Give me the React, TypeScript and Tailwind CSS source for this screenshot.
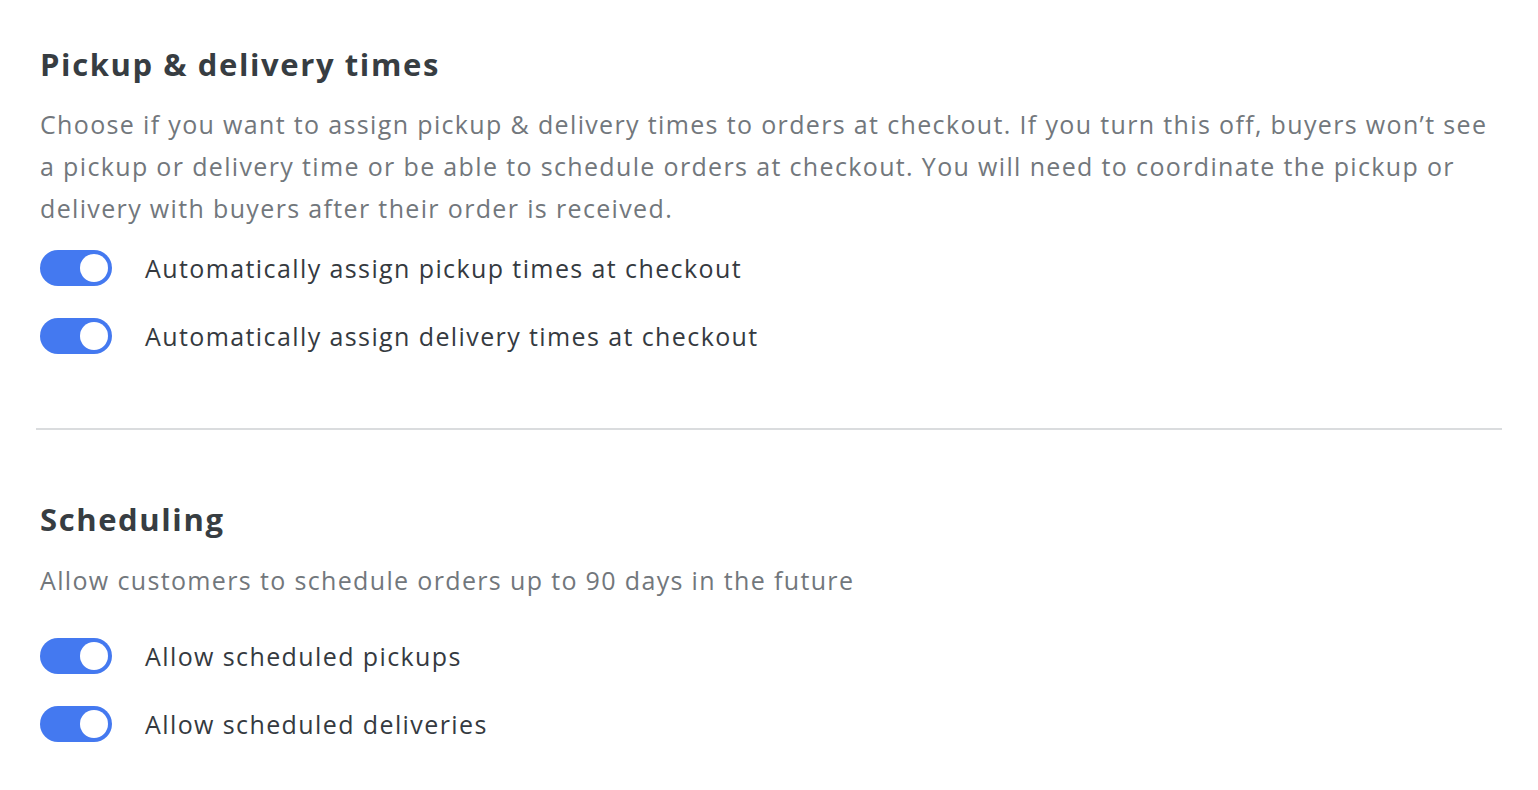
import { useState } from "react";

type ToggleProps = { on: boolean; onChange: () => void };

function Toggle({ on, onChange }: ToggleProps) {
  return (
    <button
      onClick={onChange}
      className={`relative h-[36px] w-[72px] shrink-0 rounded-full transition ${
        on ? "bg-[#4479f0]" : "bg-[#c8ccd0]"
      }`}
    >
      <span
        className={`absolute top-[4px] h-[28px] w-[28px] rounded-full bg-white transition-all ${
          on ? "left-[40px]" : "left-[4px]"
        }`}
      />
    </button>
  );
}

function ToggleRow({ label }: { label: string }) {
  const [on, setOn] = useState(true);
  return (
    <div className="flex items-center gap-[33px]">
      <Toggle on={on} onChange={() => setOn(!on)} />
      <span className="text-[25px] leading-[32px] tracking-[1.4px] text-[#353a3f]">{label}</span>
    </div>
  );
}

export default function App() {
  return (
    <div
      className="min-h-screen bg-white"
      style={{ fontFamily: "'Open Sans', sans-serif" }}
    >
      {/* Pickup & delivery */}
      <section className="px-[40px] pt-[44px]">
        <h2 className="text-[31px] leading-[40px] font-bold tracking-[1.6px] text-[#373d42]">
          Pickup &amp; delivery times
        </h2>
        <p className="mt-[19px] text-[25px] leading-[42px] tracking-[1.35px] text-[#72777c]">
          Choose if you want to assign pickup &amp; delivery times to orders at checkout. If you turn
          this off, buyers won’t see a pickup or delivery time or be able to schedule orders at
          checkout. You will need to coordinate the pickup or delivery with buyers after their order
          is received.
        </p>
        <div className="mt-[21px] flex flex-col gap-[32px]">
          <ToggleRow label="Automatically assign pickup times at checkout" />
          <ToggleRow label="Automatically assign delivery times at checkout" />
        </div>
      </section>

      <hr className="mx-[36px] mt-[74px] border-0 h-[2px] bg-[#dadcde]" />

      {/* Scheduling */}
      <section className="px-[40px] pt-[69px]">
        <h2 className="text-[31px] leading-[40px] font-bold tracking-[1.6px] text-[#373d42]">
          Scheduling
        </h2>
        <p className="mt-[20px] text-[25px] leading-[42px] tracking-[1.35px] text-[#72777c]">
          Allow customers to schedule orders up to 90 days in the future
        </p>
        <div className="mt-[37px] flex flex-col gap-[32px]">
          <ToggleRow label="Allow scheduled pickups" />
          <ToggleRow label="Allow scheduled deliveries" />
        </div>
      </section>
    </div>
  );
}
